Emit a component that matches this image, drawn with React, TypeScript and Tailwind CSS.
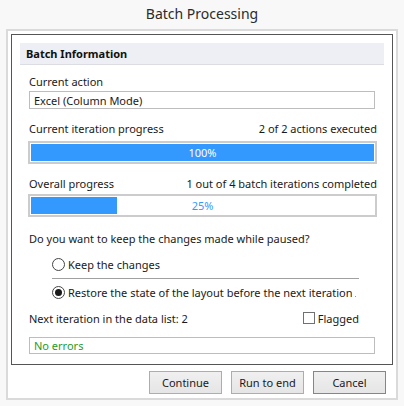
import { useState } from 'react';

const font = { fontFamily: '"Segoe UI", "Noto Sans", "Open Sans", sans-serif' };

function ProgressBar({ value }: { value: number }) {
  return (
    <div className="relative ml-[8px] mr-[7px] h-[23px] border-2 border-[#cccccc] bg-white p-px">
      <div className="h-full bg-[#3399ff]" style={{ width: `${value}%` }} />
      <div
        className={`absolute inset-0 flex items-center justify-center ${
          value > 55 ? 'text-white' : 'text-[#3399ff]'
        }`}
      >
        {value}%
      </div>
    </div>
  );
}

function Radio({ checked, label, onClick }: { checked: boolean; label: string; onClick: () => void }) {
  return (
    <button onClick={onClick} className="flex h-[14px] items-center gap-[3px] text-left">
      <span className="flex h-[13px] w-[13px] items-center justify-center rounded-full border border-[#444] bg-white">
        {checked && <span className="h-[7px] w-[7px] rounded-full bg-[#1a1a1a]" />}
      </span>
      <span>{label}</span>
    </button>
  );
}

export default function App() {
  const [keep, setKeep] = useState(false);
  const [flagged, setFlagged] = useState(false);

  return (
    <div className="h-[406px] w-[404px] bg-[#f8f8f8] text-[11px] leading-none text-[#1a1a1a]" style={font}>
      {/* Title */}
      <div className="flex h-[29px] items-center justify-center pb-[1px] text-[14px] text-[#2b2b2b]">
        Batch Processing
      </div>

      <div className="mx-[6px] h-[371px] border-2 border-[#dadada] bg-white px-[3px] pt-[3px]">
        {/* Dark framed content */}
        <div className="h-[331px] border border-[#555] px-[8px] pt-[8px]">
          <div className="flex h-[22px] items-center border-b border-[#dcdde3] bg-[#eeeff4] pl-[6px] font-bold text-[#111]">
            Batch Information
          </div>

          <div className="ml-[9px] mt-[9px] flex h-[14px] items-center">Current action</div>
          <div className="ml-[9px] mr-[9px] mt-[3px] flex h-[18px] items-center border border-[#bdbdbd] bg-white pl-[4px]">
            Excel (Column Mode)
          </div>

          <div className="ml-[9px] mr-[7px] mt-[12px] flex h-[14px] items-center justify-between">
            <span>Current iteration progress</span>
            <span>2 of 2 actions executed</span>
          </div>
          <div className="mt-[6px]">
            <ProgressBar value={100} />
          </div>

          <div className="ml-[9px] mr-[7px] mt-[12px] flex h-[14px] items-center justify-between">
            <span>Overall progress</span>
            <span>1 out of 4 batch iterations completed</span>
          </div>
          <div className="mt-[4px]">
            <ProgressBar value={25} />
          </div>

          <div className="ml-[9px] mt-[14px] flex h-[14px] items-center">
            Do you want to keep the changes made while paused?
          </div>

          <div className="ml-[32px] mr-[25px] mt-[12px]">
            <Radio checked={keep} label="Keep the changes" onClick={() => setKeep(true)} />
            <div className="mb-[6px] mt-[7px] h-px bg-[#a0a0a0]" />
            <div className="flex items-center">
              <Radio
                checked={!keep}
                label="Restore the state of the layout before the next iteration"
                onClick={() => setKeep(false)}
              />
              <span className="ml-[3px] mt-[8px] h-px w-px bg-[#999]" />
            </div>
          </div>

          <div className="ml-[9px] mr-[25px] mt-[12px] flex h-[14px] items-center justify-between">
            <span>Next iteration in the data list: 2</span>
            <button onClick={() => setFlagged(!flagged)} className="flex items-center gap-[3px]">
              <span className="flex h-[12px] w-[12px] items-center justify-center border border-[#707070] bg-white text-[9px]">
                {flagged ? '✓' : ''}
              </span>
              <span>Flagged</span>
            </button>
          </div>

          <div className="ml-[9px] mr-[9px] mt-[12px] flex h-[17px] items-center border border-[#bdbdbd] bg-white pl-[4px] text-[#1f9b1f]">
            No errors
          </div>
        </div>

        {/* Buttons */}
        <div className="mr-[7px] mt-[6px] flex justify-end gap-[9px]">
          <button className="flex h-[23px] w-[73px] items-center justify-center border border-[#adadad] bg-gradient-to-b from-[#f0f0f0] to-[#e5e5e5]">
            Continue
          </button>
          <button className="flex h-[23px] w-[73px] items-center justify-center border border-[#adadad] bg-gradient-to-b from-[#f0f0f0] to-[#e5e5e5]">
            Run to end
          </button>
          <button className="flex h-[23px] w-[73px] items-center justify-center border border-[#3399ff] bg-gradient-to-b from-[#f0f0f0] to-[#e5e5e5]">
            Cancel
          </button>
        </div>
      </div>
    </div>
  );
}
